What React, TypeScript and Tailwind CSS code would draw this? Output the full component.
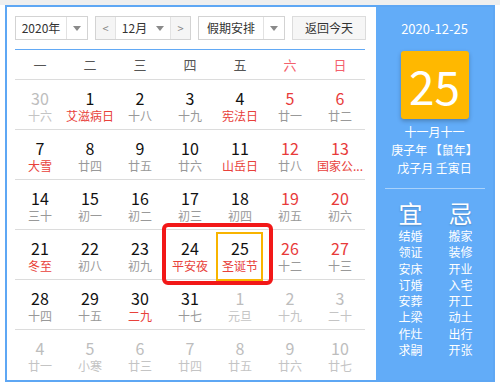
import React from 'react';

type Day = {
  n: number;
  lunar: string;
  other?: boolean;
  redNum?: boolean;
  redLunar?: boolean;
};

const weeks: Day[][] = [
  [
    { n: 30, lunar: '十六', other: true },
    { n: 1, lunar: '艾滋病日', redLunar: true },
    { n: 2, lunar: '十八' },
    { n: 3, lunar: '十九' },
    { n: 4, lunar: '宪法日', redLunar: true },
    { n: 5, lunar: '廿一', redNum: true },
    { n: 6, lunar: '廿二', redNum: true },
  ],
  [
    { n: 7, lunar: '大雪', redLunar: true },
    { n: 8, lunar: '廿四' },
    { n: 9, lunar: '廿五' },
    { n: 10, lunar: '廿六' },
    { n: 11, lunar: '山岳日', redLunar: true },
    { n: 12, lunar: '廿八', redNum: true },
    { n: 13, lunar: '国家公...', redNum: true, redLunar: true },
  ],
  [
    { n: 14, lunar: '三十' },
    { n: 15, lunar: '初一' },
    { n: 16, lunar: '初二' },
    { n: 17, lunar: '初三' },
    { n: 18, lunar: '初四' },
    { n: 19, lunar: '初五', redNum: true },
    { n: 20, lunar: '初六', redNum: true },
  ],
  [
    { n: 21, lunar: '冬至', redLunar: true },
    { n: 22, lunar: '初八' },
    { n: 23, lunar: '初九' },
    { n: 24, lunar: '平安夜', redLunar: true },
    { n: 25, lunar: '圣诞节', redLunar: true },
    { n: 26, lunar: '十二', redNum: true },
    { n: 27, lunar: '十三', redNum: true },
  ],
  [
    { n: 28, lunar: '十四' },
    { n: 29, lunar: '十五' },
    { n: 30, lunar: '二九', redLunar: true },
    { n: 31, lunar: '十七' },
    { n: 1, lunar: '元旦', other: true },
    { n: 2, lunar: '十九', other: true },
    { n: 3, lunar: '二十', other: true },
  ],
  [
    { n: 4, lunar: '廿一', other: true },
    { n: 5, lunar: '小寒', other: true },
    { n: 6, lunar: '廿三', other: true },
    { n: 7, lunar: '廿四', other: true },
    { n: 8, lunar: '廿五', other: true },
    { n: 9, lunar: '廿六', other: true },
    { n: 10, lunar: '廿七', other: true },
  ],
];

const yi = ['结婚', '领证', '安床', '订婚', '安葬', '上梁', '作灶', '求嗣'];
const ji = ['搬家', '装修', '开业', '入宅', '开工', '动土', '出行', '开张'];

const Caret = () => (
  <svg width="8" height="5" viewBox="0 0 8 5">
    <path d="M0 0 L8 0 L4 5 Z" fill="#8a8a8a" />
  </svg>
);

const Select = ({ label, width }: { label: string; width: string }) => (
  <div className={`flex h-[24px] ${width} border border-[#d3d3d3] bg-white`}>
    <div className="flex-1 flex items-center justify-center text-[12px] text-[#333]">{label}</div>
    <div className="w-[21px] flex items-center justify-center border-l border-[#e2e2e2]">
      <Caret />
    </div>
  </div>
);

const App: React.FC = () => {
  return (
    <div className="w-[500px] h-[388px] bg-white" style={{ fontFamily: '"Noto Sans CJK SC", "Noto Sans", sans-serif' }}>
      <div className="h-[5px] bg-[#efefef]" />
      <div className="ml-[5px] w-[490px] h-[377px] border-2 border-[#5ea7f4] flex">
        {/* calendar side */}
        <div className="relative w-[369px] pl-[8px] pt-[9px]">
          <div className="flex gap-[7px] w-[351px]">
            <Select label="2020年" width="w-[73px]" />
            <div className="flex h-[24px] w-[96px] border border-[#d3d3d3] bg-white">
              <div className="w-[20px] flex items-center justify-center bg-[#f5f5f5] border-r border-[#e2e2e2] text-[11px] text-[#888]">&lt;</div>
              <div className="flex-1 flex items-center justify-center gap-[9px] text-[12px] text-[#333]">
                <span>12月</span>
                <Caret />
              </div>
              <div className="w-[20px] flex items-center justify-center bg-[#f5f5f5] border-l border-[#e2e2e2] text-[11px] text-[#888]">&gt;</div>
            </div>
            <Select label="假期安排" width="w-[87px]" />
            <div className="h-[24px] w-[74px] border border-[#dcdcdc] bg-[#f6f6f6] flex items-center justify-center text-[12px] text-[#333]">
              返回今天
            </div>
          </div>
          <div className="mt-[9px] w-[350px] h-px bg-[#62a9f5]" />
          <div className="w-[350px] grid grid-cols-7 h-[30px] border-b border-[#dcdcdc] items-center text-[13px]">
            {['一', '二', '三', '四', '五', '六', '日'].map((w, i) => (
              <div key={w} className={`text-center ${i > 4 ? 'text-[#f4606c]' : 'text-[#555]'}`}>{w}</div>
            ))}
          </div>
          {weeks.map((week, wi) => (
            <div key={wi} className={`w-[350px] grid grid-cols-7 h-[50px] ${wi < 5 ? 'border-b border-[#dcdcdc]' : ''}`}>
              {week.map((d, di) => {
                const numColor = d.other ? 'text-[#bdbdbd]' : d.redNum ? 'text-[#e83a3a]' : 'text-[#111]';
                const lunarColor = d.other ? 'text-[#c4c4c4]' : d.redLunar ? 'text-[#e8413b]' : 'text-[#999]';
                return (
                  <div key={di} className="flex flex-col items-center pt-[9px]">
                    <div className={`text-[16px] leading-[18px] ${numColor}`}>{d.n}</div>
                    <div className={`text-[12px] leading-[18px] whitespace-nowrap ${lunarColor}`}>{d.lunar}</div>
                  </div>
                );
              })}
            </div>
          ))}
          {/* highlight overlays */}
          <div className="absolute left-[155px] top-[216px] w-[111px] h-[62px] border-4 border-[#f21818] rounded-[6px]" />
          <div className="absolute left-[209px] top-[225px] w-[47px] h-[49px] border-2 border-[#f8b400]" />
        </div>

        {/* info side */}
        <div className="flex-1 bg-[#62acf8] flex flex-col items-center text-white">
          <div className="pt-[13px] text-[13px] leading-[18px]">2020-12-25</div>
          <div className="mt-[13px] w-[68px] h-[68px] bg-[#ffb800] rounded-[3px] shadow-[0_2px_4px_rgba(0,0,0,0.25)] flex items-center justify-center text-[46px] leading-none">
            25
          </div>
          <div className="mt-[4px] text-[12px] leading-[18px]">十一月十一</div>
          <div className="text-[12px] leading-[18px] whitespace-nowrap">庚子年 【鼠年】</div>
          <div className="text-[12px] leading-[18px]">戊子月 壬寅日</div>
          <div className="mt-[11px] w-[100px] h-px bg-[#a9d2fb]" />
          <div className="mt-[9px] grid grid-cols-2 w-[100px] ml-[2px]">
            <div className="flex flex-col items-center">
              <div className="text-[24px] leading-[30px] [text-shadow:0_1px_2px_rgba(0,0,0,0.2)]">宜</div>
              {yi.map((t) => (
                <div key={t} className="text-[12px] leading-[16.3px]">{t}</div>
              ))}
            </div>
            <div className="flex flex-col items-center">
              <div className="text-[24px] leading-[30px] [text-shadow:0_1px_2px_rgba(0,0,0,0.2)]">忌</div>
              {ji.map((t) => (
                <div key={t} className="text-[12px] leading-[16.3px]">{t}</div>
              ))}
            </div>
          </div>
        </div>
      </div>
    </div>
  );
};

export default App;
